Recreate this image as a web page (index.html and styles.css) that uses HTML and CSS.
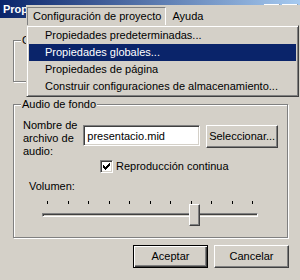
FILE: index.html
```html
<!DOCTYPE html>
<html>
	<head>
		<meta charset="UTF-8" />
		<title>Propiedades del proyecto</title>
		<link rel="stylesheet" href="styles.css">
	</head>
	<body>
		<div class="titlebar">
			<span class="title">Propiedades del proyecto</span>
			<span class="title-buttons">
				<span class="title-btn"></span>
				<span class="title-btn"></span>
			</span>
		</div>
		<div class="content">
			<fieldset class="group group-top">
				<legend>Color de fondo</legend>
				<div class="group-body"></div>
			</fieldset>
			<fieldset class="group group-audio">
				<legend>Audio de fondo</legend>
				<div class="file-row">
					<label class="file-label" for="audio-file">Nombre de archivo de audio:</label>
					<input class="text-input" id="audio-file" type="text" value="presentacio.mid" />
					<button class="btn btn-select">Seleccionar...</button>
				</div>
				<div class="check-row">
					<span class="checkbox">
						<svg width="7" height="7" viewBox="0 0 7 7"><path d="M0 2h1v1h1v1h1v-1h1v-1h1v-1h1v-1h1v3h-1v1h-1v1h-1v1h-1v1h-1v-1h-1v-1h-1z" fill="#000"/></svg>
					</span>
					<span>Reproducción continua</span>
				</div>
				<div class="volume-label">Volumen:</div>
				<div class="slider">
					<div class="ticks">
						<i></i><i></i><i></i><i></i><i></i><i></i><i></i><i></i><i></i><i></i><i></i>
					</div>
					<div class="track-zone">
						<div class="track"></div>
						<div class="thumb" style="left: 147px"></div>
					</div>
				</div>
			</fieldset>
			<div class="buttons">
				<button class="btn btn-default">Aceptar</button>
				<button class="btn">Cancelar</button>
			</div>
		</div>

		<div class="menubar">
			<span class="menu-title open">Configuración de proyecto</span>
			<span class="menu-title">Ayuda</span>
		</div>
		<ul class="dropdown">
			<li>Propiedades predeterminadas...</li>
			<li class="selected">Propiedades globales...</li>
			<li>Propiedades de página</li>
			<li>Construir configuraciones de almacenamiento...</li>
		</ul>
	</body>
</html>
```

FILE: styles.css
```css
body {
	margin: 0;
	width: 300px;
	height: 280px;
	overflow: hidden;
	position: relative;
	background: #d4d0c8;
	font-family: "Liberation Sans", Arial, sans-serif;
	font-size: 11px;
	line-height: 13px;
	color: #000;
}
.titlebar {
	height: 18px;
	display: flex;
	align-items: flex-start;
	background: linear-gradient(to right, #0a246a, #a6caf0);
}
.title {
	flex: 1;
	padding: 3px 0 0 3px;
	color: #fff;
	font-weight: bold;
	white-space: nowrap;
	overflow: hidden;
}
.title-buttons {
	display: flex;
	gap: 2px;
	padding: 4px 2px 0 0;
}
.title-btn {
	width: 16px;
	height: 14px;
	box-sizing: border-box;
	background: #d4d0c8;
	border: 1px solid;
	border-color: #fff #404040 #404040 #fff;
}
.content {
	padding: 16px 12px 0 13px;
}
.group {
	margin: 0;
	min-width: 0;
	padding: 8px 9px 11px 9px;
	border: 1px solid #808080;
	box-shadow: inset 1px 1px #fff, 1px 1px #fff;
}
.group legend {
	margin-left: -2px;
	padding: 0 1px;
	background: #d4d0c8;
	line-height: 13px;
}
.group-top {
	padding-top: 0;
	padding-bottom: 0;
}
.group-top .group-body {
	height: 34px;
}
.group-audio {
	margin-top: 16px;
}
.file-row {
	display: flex;
	align-items: flex-start;
}
.file-label {
	width: 60px;
	margin-right: 3px;
}
.text-input {
	width: 117px;
	height: 21px;
	box-sizing: border-box;
	margin: 6px 0 0;
	padding: 0 3px;
	font: inherit;
	background: #fff;
	border: 1px solid;
	border-color: #808080 #fff #fff #808080;
	box-shadow: inset 1px 1px #404040, inset -1px -1px #d4d0c8;
	outline: none;
}
.btn {
	width: 75px;
	height: 23px;
	box-sizing: border-box;
	padding: 0;
	font: inherit;
	color: #000;
	background: #d4d0c8;
	border: 1px solid;
	border-color: #fff #404040 #404040 #fff;
	box-shadow: inset -1px -1px #808080;
}
.btn-select {
	margin: 6px 0 0 6px;
}
.btn-default {
	border-color: #000;
	box-shadow: inset 1px 1px #fff, inset -1px -1px #404040, inset -2px -2px #808080;
}
.check-row {
	display: flex;
	align-items: center;
	gap: 3px;
	margin: 2px 0 0 77px;
}
.checkbox {
	width: 13px;
	height: 13px;
	box-sizing: border-box;
	display: flex;
	align-items: center;
	justify-content: center;
	background: #fff;
	border: 1px solid;
	border-color: #808080 #fff #fff #808080;
	box-shadow: inset 1px 1px #404040, inset -1px -1px #d4d0c8;
}
.volume-label {
	margin: 7px 0 0 6px;
}
.slider {
	width: 216px;
	margin: 8px 0 0 19px;
}
.ticks {
	height: 3px;
	display: flex;
	justify-content: space-between;
	padding: 0 5px;
}
.ticks i {
	width: 1px;
	background: #000;
}
.track-zone {
	position: relative;
	height: 22px;
	display: flex;
	align-items: center;
}
.track {
	flex: 1;
	height: 4px;
	box-sizing: border-box;
	border: 1px solid;
	border-color: #808080 #fff #fff #808080;
	box-shadow: inset 1px 1px #404040;
}
.thumb {
	position: absolute;
	top: 0;
	width: 11px;
	height: 22px;
	box-sizing: border-box;
	background: #d4d0c8;
	border: 1px solid;
	border-color: #fff #404040 #404040 #fff;
	box-shadow: inset -1px -1px #808080;
}
.buttons {
	display: flex;
	justify-content: flex-end;
	gap: 6px;
	margin: 7px -1px 0 0;
}
.menubar {
	position: absolute;
	left: 26px;
	top: 5px;
	right: 0;
	height: 20px;
	display: flex;
	align-items: flex-end;
	background: #d4d0c8;
}
.menu-title {
	height: 18px;
	line-height: 17px;
	padding: 0 5px;
	box-sizing: border-box;
	border: 1px solid transparent;
	border-bottom: 0;
}
.menu-title.open {
	margin-left: 1px;
	padding-right: 4px;
	border-color: #808080 #fff transparent #808080;
}
.dropdown {
	position: absolute;
	left: 26px;
	top: 25px;
	width: 273px;
	box-sizing: border-box;
	margin: 0;
	padding: 1px 2px;
	list-style: none;
	background: #d4d0c8;
	border: 1px solid;
	border-color: #d4d0c8 #404040 #404040 #d4d0c8;
	box-shadow: inset 1px 1px #fff, inset -1px -1px #808080;
}
.dropdown li {
	height: 17px;
	line-height: 17px;
	padding-left: 16px;
	white-space: nowrap;
}
.dropdown li.selected {
	background: #0a246a;
	color: #fff;
}
```
